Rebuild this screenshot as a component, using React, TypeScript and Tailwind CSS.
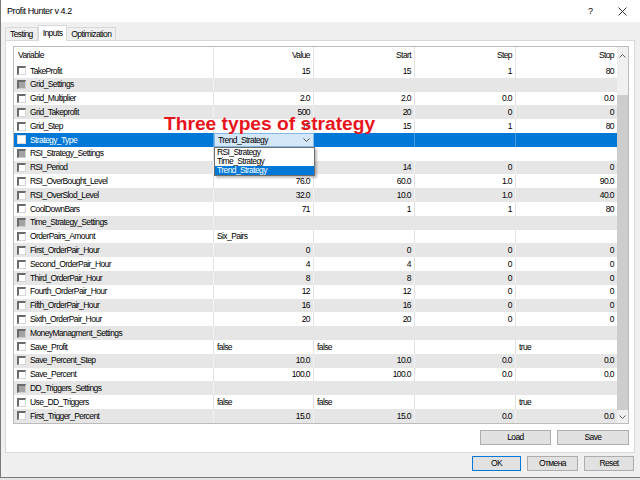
import React from 'react';

type Row = {
  name: string;
  group?: boolean;
  selected?: boolean;
  vals?: [string, string, string, string];
  left?: boolean;
};

const rows: Row[] = [
  { name: 'TakeProfit', vals: ['15', '15', '1', '80'] },
  { name: 'Grid_Settings', group: true },
  { name: 'Grid_Multiplier', vals: ['2.0', '2.0', '0.0', '0.0'] },
  { name: 'Grid_Takeprofit', vals: ['500', '20', '0', '0'] },
  { name: 'Grid_Step', vals: ['15', '15', '1', '80'] },
  { name: 'Strategy_Type', selected: true },
  { name: 'RSI_Strategy_Settings', group: true },
  { name: 'RSI_Period', vals: ['14', '14', '0', '0'] },
  { name: 'RSI_OverBought_Level', vals: ['76.0', '60.0', '1.0', '90.0'] },
  { name: 'RSI_OverSlod_Level', vals: ['32.0', '10.0', '1.0', '40.0'] },
  { name: 'CoolDownBars', vals: ['71', '1', '1', '80'] },
  { name: 'Time_Strategy_Settings', group: true },
  { name: 'OrderPairs_Amount', vals: ['Six_Pairs', '', '', ''], left: true },
  { name: 'First_OrderPair_Hour', vals: ['0', '0', '0', '0'] },
  { name: 'Second_OrderPair_Hour', vals: ['4', '4', '0', '0'] },
  { name: 'Third_OrderPair_Hour', vals: ['8', '8', '0', '0'] },
  { name: 'Fourth_OrderPair_Hour', vals: ['12', '12', '0', '0'] },
  { name: 'Fifth_OrderPair_Hour', vals: ['16', '16', '0', '0'] },
  { name: 'Sixth_OrderPair_Hour', vals: ['20', '20', '0', '0'] },
  { name: 'MoneyManagment_Settings', group: true },
  { name: 'Save_Profit', vals: ['false', 'false', '', 'true'], left: true },
  { name: 'Save_Percent_Step', vals: ['10.0', '10.0', '0.0', '0.0'] },
  { name: 'Save_Percent', vals: ['100.0', '100.0', '0.0', '0.0'] },
  { name: 'DD_Triggers_Settings', group: true },
  { name: 'Use_DD_Triggers', vals: ['false', 'false', '', 'true'], left: true },
  { name: 'First_Trigger_Percent', vals: ['15.0', '15.0', '0.0', '0.0'] },
];

function Check({ group, sel }: { group?: boolean; sel?: boolean }) {
  if (sel)
    return <div className="w-[9px] h-[9px] shrink-0 bg-white border border-[#d8d8d8]" />;
  if (group)
    return (
      <div className="w-[9px] h-[9px] shrink-0 bg-[#a3a3a3] border-t-2 border-l-2 border-r border-b border-t-[#6a6a6a] border-l-[#6a6a6a] border-r-[#cfcfcf] border-b-[#cfcfcf]" />
    );
  return (
    <div className="w-[9px] h-[9px] shrink-0 bg-white border-t-2 border-l-2 border-r border-b border-t-[#6a6a6a] border-l-[#6a6a6a] border-r-[#d6d6d6] border-b-[#d6d6d6]" />
  );
}

function Chevron({ dir, color }: { dir: 'up' | 'down'; color: string }) {
  return (
    <svg width="7" height="4" viewBox="0 0 7 4">
      {dir === 'down' ? (
        <polyline points="0.5,0.5 3.5,3.5 6.5,0.5" fill="none" stroke={color} strokeWidth="1" />
      ) : (
        <polyline points="0.5,3.5 3.5,0.5 6.5,3.5" fill="none" stroke={color} strokeWidth="1" />
      )}
    </svg>
  );
}

function DataRow({ r, i }: { r: Row; i: number }) {
  const grey = i % 2 === 1;
  if (r.selected) {
    return (
      <div className="grid grid-cols-[200px_100px_101px_101px_101px] h-[13.8px] bg-[#0078d7] text-white">
        <div className="flex items-center pl-[3px] gap-[4px] border-r border-[#4a9be0]">
          <Check sel />
          <span className="leading-none">{r.name}</span>
        </div>
        <div className="flex items-center justify-between pl-[3px] pr-[3px] bg-[#d3e7f8] border border-[#86b8e6] text-black">
          <span className="leading-none">Trend_Strategy</span>
          <Chevron dir="down" color="#505050" />
        </div>
        <div className="border-r border-[#4a9be0]" />
        <div className="border-r border-[#4a9be0]" />
        <div />
      </div>
    );
  }
  const bg = grey ? 'bg-[#e6e6e6]' : 'bg-white';
  const line = grey ? 'border-[#f2f2f2]' : 'border-[#e2e2e2]';
  if (r.group) {
    return (
      <div className={`grid grid-cols-[200px_403px] h-[13.8px] ${bg}`}>
        <div className={`flex items-center pl-[3px] gap-[4px] border-r ${line}`}>
          <Check group />
          <span className="leading-none">{r.name}</span>
        </div>
        <div />
      </div>
    );
  }
  const v = r.vals!;
  return (
    <div className={`grid grid-cols-[200px_100px_101px_101px_101px] h-[13.8px] ${bg}`}>
      <div className={`flex items-center pl-[3px] gap-[4px] border-r ${line}`}>
        <Check />
        <span className="leading-none">{r.name}</span>
      </div>
      {v.map((x, k) => (
        <div
          key={k}
          className={`flex items-center ${r.left ? 'justify-start pl-[3px]' : 'justify-end pr-[3px]'} ${k < 3 ? `border-r ${line}` : ''}`}
        >
          <span className="leading-none">{x}</span>
        </div>
      ))}
    </div>
  );
}

function Btn({ label, w, def }: { label: string; w: string; def?: boolean }) {
  return (
    <div
      className={`${w} h-[15px] flex items-center justify-center bg-[#e1e1e1] border ${def ? 'border-[#0078d7]' : 'border-[#adadad]'}`}
    >
      <span className="leading-none">{label}</span>
    </div>
  );
}

export default function App() {
  return (
    <div className="w-[640px] h-[480px] bg-[#e4e4e4] overflow-hidden font-['Liberation_Sans',Arial,sans-serif] text-[8.5px] tracking-[-0.6px] text-black">
      <div className="relative w-[640px] h-[478px] bg-[#f0f0f0] border-l border-b border-[#7a7a7a] flex flex-col">
        {/* title bar */}
        <div className="h-[22px] shrink-0 bg-white flex items-center pl-[6px]">
          <span className="text-[9px] tracking-[-0.4px] leading-none">Profit Hunter v 4.2</span>
          <div className="ml-auto flex items-center">
            <span className="text-[9px] tracking-normal leading-none mr-[25px]">?</span>
            <svg width="9" height="9" viewBox="0 0 9 9" className="mr-[13px]">
              <path d="M0.5 0.5 L8.5 8.5 M8.5 0.5 L0.5 8.5" stroke="#222" strokeWidth="0.9" />
            </svg>
          </div>
        </div>
        {/* tabs */}
        <div className="h-[18px] shrink-0 flex items-end pl-[4px]">
          <div className="h-[13px] px-[4px] flex items-center bg-[#f0f0f0] border border-b-0 border-[#d9d9d9]">
            <span className="leading-none">Testing</span>
          </div>
          <div className="relative z-10 -mb-px h-[16px] px-[4px] flex items-center bg-white border border-b-0 border-[#d9d9d9]">
            <span className="leading-none">Inputs</span>
          </div>
          <div className="h-[13px] px-[4px] flex items-center bg-[#f0f0f0] border border-b-0 border-l-0 border-[#d9d9d9]">
            <span className="leading-none">Optimization</span>
          </div>
        </div>
        {/* panel */}
        <div className="ml-[4px] w-[630px] h-[413px] shrink-0 bg-white border border-[#d9d9d9] pl-[7px] pr-[5px] pt-[5px] flex flex-col">
          <div className="relative w-[616px] h-[378px] border border-[#bcbcbc] flex">
            <div className="w-[603px] flex flex-col">
              <div className="grid grid-cols-[200px_100px_101px_101px_101px] h-[17px] bg-white">
                <div className="flex items-center pl-[4px] border-r border-[#e5e5e5]">
                  <span className="leading-none">Variable</span>
                </div>
                {['Value', 'Start', 'Step', 'Stop'].map((h, k) => (
                  <div
                    key={h}
                    className={`flex items-center justify-end pr-[3px] ${k < 3 ? 'border-r border-[#e5e5e5]' : ''}`}
                  >
                    <span className="leading-none">{h}</span>
                  </div>
                ))}
              </div>
              {rows.map((r, i) => (
                <DataRow key={r.name} r={r} i={i} />
              ))}
            </div>
            {/* scrollbar */}
            <div className="w-[11px] flex flex-col bg-[#f0f0f0]">
              <div className="h-[17px] flex items-center justify-center">
                <Chevron dir="up" color="#606060" />
              </div>
              <div className="h-[31px]" />
              <div className="flex-1 bg-[#cdcdcd]" />
              <div className="h-[13px] flex items-center justify-center">
                <Chevron dir="down" color="#606060" />
              </div>
            </div>
            {/* dropdown list */}
            <div className="absolute left-[200px] top-[100px] w-[101px] h-[29px] bg-white border border-[#6e6e6e] shadow-[2px_2px_2px_rgba(0,0,0,0.25)] flex flex-col z-20">
              <div className="h-[9px] flex items-center pl-[2px]">
                <span className="leading-none">RSI_Strategy</span>
              </div>
              <div className="h-[9px] flex items-center pl-[2px]">
                <span className="leading-none">Time_Strategy</span>
              </div>
              <div className="h-[9px] flex items-center pl-[2px] bg-[#0078d7] text-white">
                <span className="leading-none">Trend_Strategy</span>
              </div>
            </div>
          </div>
          <div className="mt-[6px] flex justify-end gap-[6px]">
            <Btn label="Load" w="w-[71px]" />
            <Btn label="Save" w="w-[72px]" />
          </div>
        </div>
        {/* footer */}
        <div className="flex justify-end gap-[6px] pr-[6px] pt-[3px]">
          <Btn label="OK" w="w-[49px]" def />
          <Btn label="Отмена" w="w-[51px]" />
          <Btn label="Reset" w="w-[50px]" />
        </div>
        {/* annotation */}
        <div className="absolute left-[163px] top-[113.5px] z-30 text-[19.2px] font-bold tracking-normal leading-none text-[#e8141c] whitespace-nowrap">
          Three types of strategy
        </div>
      </div>
    </div>
  );
}
